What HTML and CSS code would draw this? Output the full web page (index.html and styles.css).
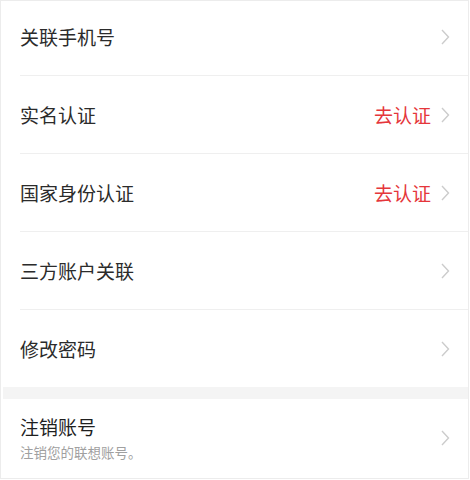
FILE: index.html
```html
<!DOCTYPE html>
<html lang="zh-CN">
<head>
<meta charset="utf-8">
<title>账号与安全</title>
<link rel="stylesheet" href="styles.css">
</head>
<body>
<div class="page">
  <div class="group">
    <div class="item first">
      <div class="inner">
        <span class="label">关联手机号</span>
        <span class="right"><svg class="chev" viewBox="0 0 10 16" width="10" height="16"><polyline points="2,1 8.5,8 2,15"/></svg></span>
      </div>
    </div>
    <div class="item">
      <div class="inner">
        <span class="label">实名认证</span>
        <span class="right"><span class="action">去认证</span><svg class="chev" viewBox="0 0 10 16" width="10" height="16"><polyline points="2,1 8.5,8 2,15"/></svg></span>
      </div>
    </div>
    <div class="item">
      <div class="inner">
        <span class="label">国家身份认证</span>
        <span class="right"><span class="action">去认证</span><svg class="chev" viewBox="0 0 10 16" width="10" height="16"><polyline points="2,1 8.5,8 2,15"/></svg></span>
      </div>
    </div>
    <div class="item">
      <div class="inner">
        <span class="label">三方账户关联</span>
        <span class="right"><svg class="chev" viewBox="0 0 10 16" width="10" height="16"><polyline points="2,1 8.5,8 2,15"/></svg></span>
      </div>
    </div>
    <div class="item last">
      <div class="inner">
        <span class="label">修改密码</span>
        <span class="right"><svg class="chev" viewBox="0 0 10 16" width="10" height="16"><polyline points="2,1 8.5,8 2,15"/></svg></span>
      </div>
    </div>
  </div>
  <div class="gap"></div>
  <div class="group">
    <div class="item last cancel">
      <div class="inner">
        <div class="text">
          <span class="label">注销账号</span>
          <span class="sub">注销您的联想账号。</span>
        </div>
        <span class="right"><svg class="chev" viewBox="0 0 10 16" width="10" height="16"><polyline points="2,1 8.5,8 2,15"/></svg></span>
      </div>
    </div>
  </div>
</div>
</body>
</html>
```
FILE: styles.css
```css
* { box-sizing: border-box; }
html, body {
  margin: 0;
  padding: 0;
  background: #ffffff;
}
body {
  font-family: "Noto Sans CJK SC", "Noto Sans", sans-serif;
  color: #2b2b2b;
}
.page {
  width: 469px;
  height: 479px;
  border: 1px solid #ececec;
  background: #ffffff;
  overflow: hidden;
}
.item {
  padding-left: 19px;
}
.inner {
  height: 78px;
  display: flex;
  align-items: center;
  justify-content: space-between;
  padding-right: 18px;
  border-bottom: 1px solid #efefef;
}
.item.first .inner {
  height: 75px;
  padding-bottom: 2px;
}
.item.last .inner {
  border-bottom: none;
  height: 77px;
}
.label {
  font-size: 19px;
  line-height: 24px;
  color: #2b2b2b;
}
.right {
  display: flex;
  align-items: center;
  gap: 9px;
}
.action {
  font-size: 19px;
  line-height: 24px;
  color: #e5363b;
}
.chev {
  display: block;
  fill: none;
  stroke: #cccccc;
  stroke-width: 1.4;
}
.gap {
  height: 12px;
  background: #f4f4f4;
  margin-left: 2px;
}
.text {
  display: flex;
  flex-direction: column;
}
.cancel .label {
  color: #1f1f1f;
}
.sub {
  font-size: 13.5px;
  line-height: 18px;
  margin-top: 4px;
  color: #a0a0a0;
}
```
